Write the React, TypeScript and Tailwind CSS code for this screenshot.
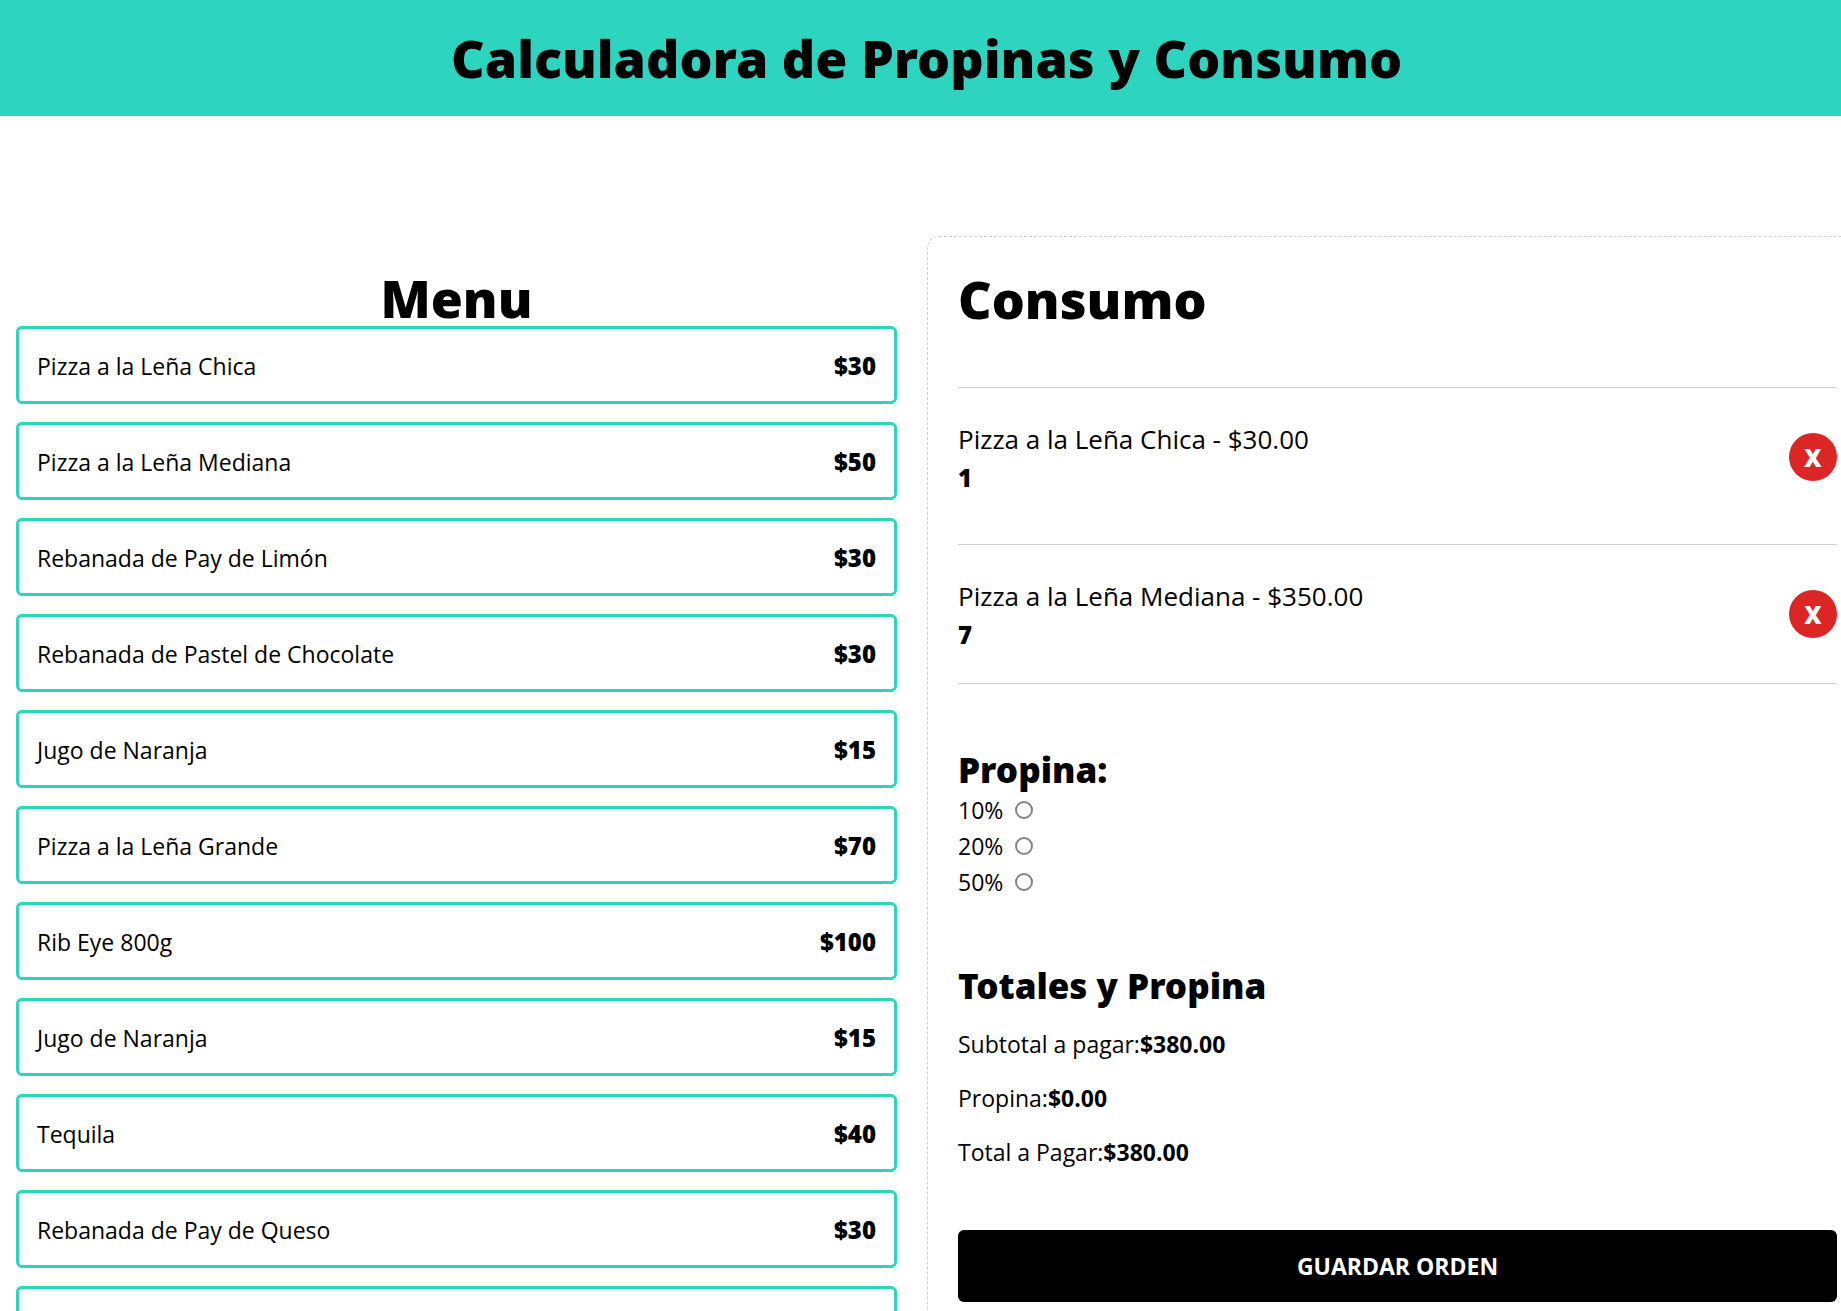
const menu = [
  { name: 'Pizza a la Leña Chica', price: 30 },
  { name: 'Pizza a la Leña Mediana', price: 50 },
  { name: 'Rebanada de Pay de Limón', price: 30 },
  { name: 'Rebanada de Pastel de Chocolate', price: 30 },
  { name: 'Jugo de Naranja', price: 15 },
  { name: 'Pizza a la Leña Grande', price: 70 },
  { name: 'Rib Eye 800g', price: 100 },
  { name: 'Jugo de Naranja', price: 15 },
  { name: 'Tequila', price: 40 },
  { name: 'Rebanada de Pay de Queso', price: 30 },
  { name: '', price: null },
];

const order = [
  { name: 'Pizza a la Leña Chica', total: '$30.00', quantity: 1 },
  { name: 'Pizza a la Leña Mediana', total: '$350.00', quantity: 7 },
];

const tips = ['10%', '20%', '50%'];

const totals = [
  { label: 'Subtotal a pagar:', value: '$380.00' },
  { label: 'Propina:', value: '$0.00' },
  { label: 'Total a Pagar:', value: '$380.00' },
];

export default function App() {
  return (
    <div className="h-screen overflow-hidden bg-white font-['Open_Sans','Noto_Sans',sans-serif] text-[23px] leading-9 text-black">
      <header className="bg-[#2dd4bf] py-7 pl-3">
        <h1 className="text-center font-['Noto_Sans','Open_Sans',sans-serif] text-[52px] leading-[60px] font-black">
          Calculadora de Propinas y Consumo
        </h1>
      </header>

      <main className="grid grid-cols-[927fr_914fr] pt-[120px]">
        <section className="pt-[30px] pr-[30px] pl-4">
          <h2 className="pt-1 text-center font-['Noto_Sans','Open_Sans',sans-serif] text-[52px] leading-14 font-black">
            Menu
          </h2>
          <div className="flex flex-col gap-[18px]">
            {menu.map((item, i) => (
              <button
                key={i}
                type="button"
                aria-label={item.name || 'Platillo'}
                className="flex min-h-[78px] w-full items-center justify-between rounded-md border-3 border-[#2dd4bf] px-[18px] pt-0.5 text-left"
              >
                <span>{item.name}</span>
                {item.price !== null && (
                  <span className="font-['Noto_Sans','Open_Sans',sans-serif] text-2xl leading-9 font-black">${item.price}</span>
                )}
              </button>
            ))}
          </div>
        </section>

        <section className="rounded-tl-xl border-t border-l border-dashed border-[#cdd0d4] pt-[30px] pr-1 pl-[30px]">
          <h2 className="pt-1 font-['Noto_Sans','Open_Sans',sans-serif] text-[52px] leading-14 font-black">Consumo</h2>

          <ul className="mt-[60px] flex flex-col gap-[18px]">
            {order.map((item) => (
              <li
                key={item.name}
                className="flex items-center justify-between border-t border-[#cdd0d4] py-[30px] last:border-b"
              >
                <div>
                  <p className="text-[26px] leading-[42px]">
                    {item.name} - {item.total}
                  </p>
                  <p className="font-['Noto_Sans','Open_Sans',sans-serif] text-2xl leading-9 font-black">{item.quantity}</p>
                </div>
                <button
                  type="button"
                  aria-label={`Eliminar ${item.name}`}
                  className="size-12 rounded-full bg-[#dc2626] pt-0.5 font-['Noto_Sans','Open_Sans',sans-serif] text-2xl font-black text-white"
                >
                  X
                </button>
              </li>
            ))}
          </ul>

          <form className="mt-[60px]">
            <h3 className="pt-1 font-['Noto_Sans','Open_Sans',sans-serif] text-[35px] leading-11 font-black">Propina:</h3>
            {tips.map((tip) => (
              <div key={tip} className="flex h-9 items-center gap-3">
                <label htmlFor={`tip-${tip}`}>{tip}</label>
                <input
                  id={`tip-${tip}`}
                  type="radio"
                  name="tip"
                  value={tip}
                  className="size-[18px] appearance-none rounded-full border-2 border-[#858585] bg-white checked:bg-[#767676]"
                />
              </div>
            ))}
          </form>

          <div className="mt-[60px] flex flex-col gap-[18px]">
            <h3 className="pt-1 font-['Noto_Sans','Open_Sans',sans-serif] text-[35px] leading-11 font-black">
              Totales y Propina
            </h3>
            {totals.map((row) => (
              <p key={row.label}>
                {row.label}
                <span className="font-bold">{row.value}</span>
              </p>
            ))}
          </div>

          <button type="button" className="mt-[60px] w-full rounded-md bg-black p-[18px] font-bold text-white uppercase">
            Guardar Orden
          </button>
        </section>
      </main>
    </div>
  );
}
